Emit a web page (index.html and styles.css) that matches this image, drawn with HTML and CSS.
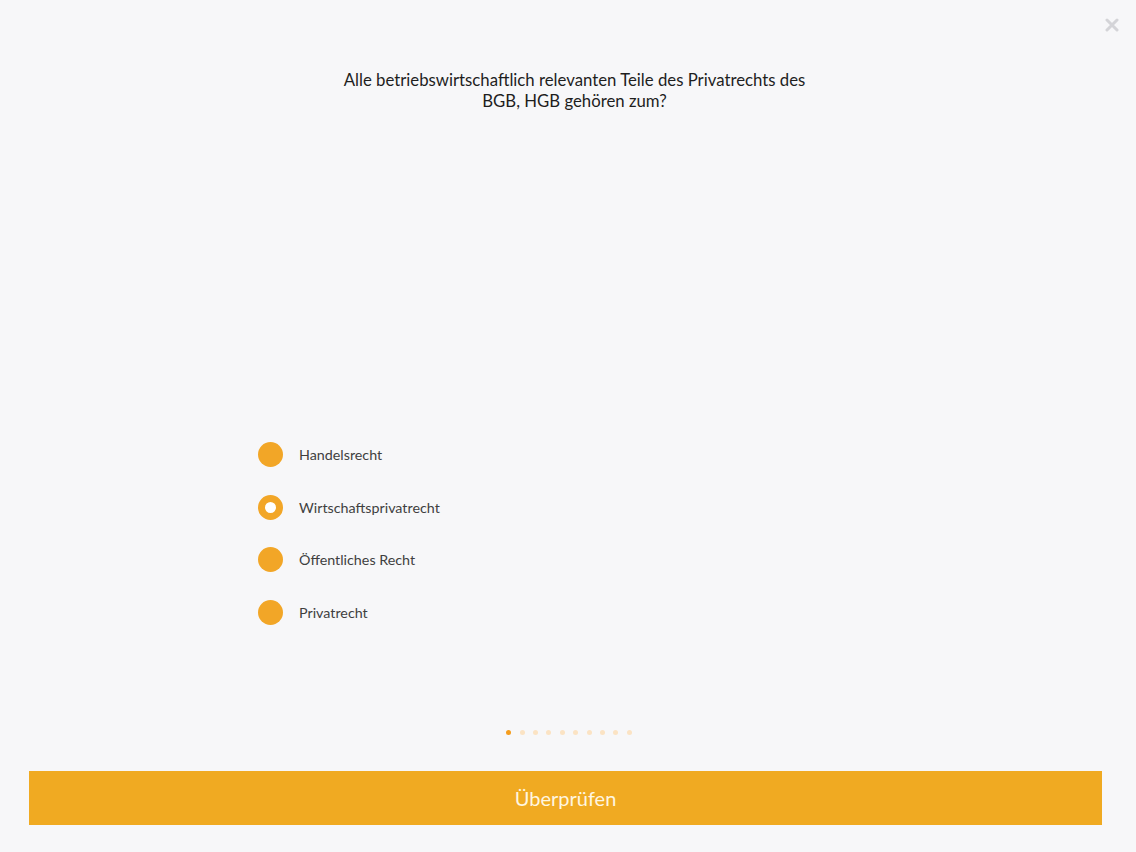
FILE: index.html
```html
<!DOCTYPE html>
<html lang="de">
<head>
<meta charset="utf-8">
<link rel="stylesheet" href="styles.css">
</head>
<body>
<div class="page">
  <button class="close" aria-label="Schließen">
    <svg width="14" height="14" viewBox="0 0 14 14"><path d="M2 2 L12 12 M12 2 L2 12" stroke="#d4d4d8" stroke-width="3" stroke-linecap="round"/></svg>
  </button>
  <h1 class="question">Alle betriebswirtschaftlich relevanten Teile des Privatrechts des<br>BGB, HGB gehören zum?</h1>
  <ul class="options">
    <li class="option"><span class="radio"></span><span class="label">Handelsrecht</span></li>
    <li class="option"><span class="radio selected"></span><span class="label">Wirtschaftsprivatrecht</span></li>
    <li class="option"><span class="radio"></span><span class="label">Öffentliches Recht</span></li>
    <li class="option"><span class="radio"></span><span class="label">Privatrecht</span></li>
  </ul>
  <div class="dots">
    <span class="dot active"></span><span class="dot"></span><span class="dot"></span><span class="dot"></span><span class="dot"></span><span class="dot"></span><span class="dot"></span><span class="dot"></span><span class="dot"></span><span class="dot"></span>
  </div>
  <button class="check">Überprüfen</button>
</div>
</body>
</html>
```
FILE: styles.css
```css
html, body {
  margin: 0;
  padding: 0;
  background: #f7f7f9;
  font-family: Lato, "Noto Sans", sans-serif;
}
.page {
  position: relative;
  width: 1136px;
  height: 852px;
  display: flex;
  flex-direction: column;
  align-items: center;
}
.close {
  position: absolute;
  top: 18px;
  right: 17px;
  border: 0;
  background: none;
  padding: 0;
  width: 14px;
  height: 14px;
}
.question {
  margin: 69px 0 0 13px;
  font-size: 16.75px;
  font-weight: 400;
  line-height: 21px;
  color: #1e1e1e;
  text-align: center;
}
.options {
  list-style: none;
  margin: 331px 0 0;
  padding: 0;
  align-self: flex-start;
  margin-left: 258px;
  display: flex;
  flex-direction: column;
  gap: 27.5px;
}
.option {
  display: flex;
  align-items: center;
  height: 25px;
}
.radio {
  width: 25px;
  height: 25px;
  border-radius: 50%;
  background: #f2a627;
  box-sizing: border-box;
}
.radio.selected {
  background: #fff;
  border: 7px solid #f2a627;
}
.label {
  margin-left: 16px;
  font-size: 14.3px;
  color: #3f3f3f;
}
.dots {
  margin-top: 105px;
  display: flex;
  gap: 8.4px;
  margin-left: 2px;
}
.dot {
  width: 5px;
  height: 5px;
  border-radius: 50%;
  background: #fbe3c4;
}
.dot.active {
  background: #f59d1e;
}
.check {
  margin-top: 36px;
  align-self: flex-start;
  margin-left: 29px;
  width: 1073px;
  height: 54px;
  border: 0;
  background: #f0aa22;
  color: #fff6e0;
  font-family: Lato, "Noto Sans", sans-serif;
  font-size: 20px;
  padding: 0;
}
```
